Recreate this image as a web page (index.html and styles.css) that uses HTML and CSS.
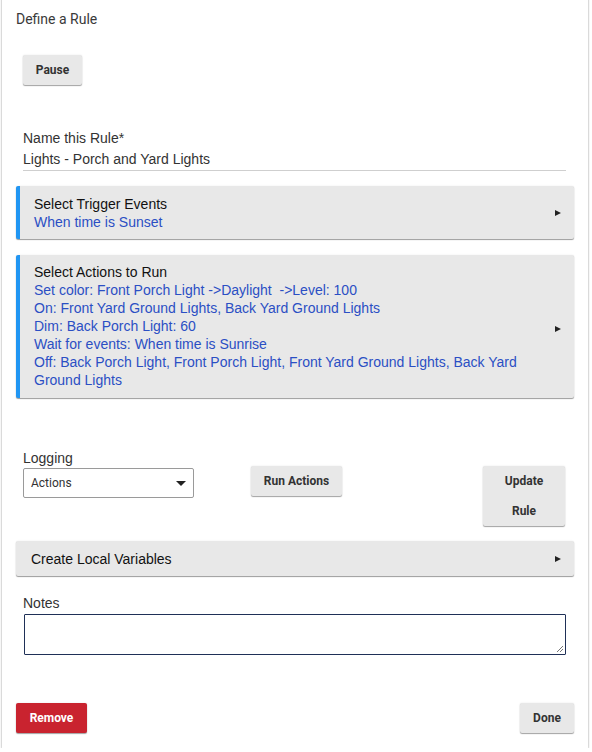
FILE: index.html
```html
<!DOCTYPE html>
<html>
<head>
<meta charset="utf-8">
<link rel="stylesheet" href="styles.css">
</head>
<body>
<div class="card">
  <div class="title">Define a Rule</div>
  <div class="pause-row"><button class="btn">Pause</button></div>

  <div class="field">
    <div class="label">Name this Rule*</div>
    <div class="text-input">Lights - Porch and Yard Lights</div>
  </div>

  <div class="panel accent trigger">
    <div class="panel-body">
      <div class="panel-title">Select Trigger Events</div>
      <div class="panel-desc">When time is Sunset</div>
    </div>
    <span class="arrow"></span>
  </div>

  <div class="panel accent actions">
    <div class="panel-body">
      <div class="panel-title">Select Actions to Run</div>
      <div class="panel-desc">Set color: Front Porch Light -&gt;Daylight&nbsp; -&gt;Level: 100</div>
      <div class="panel-desc">On: Front Yard Ground Lights, Back Yard Ground Lights</div>
      <div class="panel-desc">Dim: Back Porch Light: 60</div>
      <div class="panel-desc">Wait for events: When time is Sunrise</div>
      <div class="panel-desc">Off: Back Porch Light, Front Porch Light, Front Yard Ground Lights, Back Yard Ground Lights</div>
    </div>
    <span class="arrow"></span>
  </div>

  <div class="controls">
    <div class="logging">
      <div class="label">Logging</div>
      <div class="select"><span>Actions</span><span class="caret"></span></div>
    </div>
    <button class="btn run">Run Actions</button>
    <button class="btn update">Update<br>Rule</button>
  </div>

  <div class="panel vars">
    <div class="panel-body">
      <div class="panel-title">Create Local Variables</div>
    </div>
    <span class="arrow"></span>
  </div>

  <div class="notes">
    <div class="label">Notes</div>
    <div class="textarea"><svg class="grip" width="8" height="8" viewBox="0 0 8 8"><path d="M7 1 L1 7 M7 4 L4 7" stroke="#777" stroke-width="1"/></svg></div>
  </div>

  <div class="footer">
    <button class="btn remove">Remove</button>
    <button class="btn done">Done</button>
  </div>
</div>
</body>
</html>
```
FILE: styles.css
```css
html, body {
  margin: 0;
  padding: 0;
  background: #ffffff;
}

body {
  font-family: "Liberation Sans", Arial, sans-serif;
  font-size: 14px;
  color: #222;
}

.card {
  box-sizing: border-box;
  width: 586px;
  margin: -6px 0 0 2px;
  padding: 17px 0 15px 0;
  background: #fff;
  box-shadow: 0 1px 2px rgba(0, 0, 0, 0.35), 0 0 2px rgba(0, 0, 0, 0.12);
}

.title {
  font-family: Roboto, "Liberation Sans", sans-serif;
  font-size: 14px;
  line-height: 16px;
  color: #3a3a3a;
  margin-left: 14px;
}

.btn {
  font-family: Roboto, "Liberation Sans", sans-serif;
  font-weight: 700;
  font-size: 12px;
  color: #333;
  background: #e8e8e8;
  border: none;
  border-radius: 2px;
  padding: 0;
  height: 30px;
  box-shadow: 0 1px 1px rgba(0, 0, 0, 0.35), 0 0 2px rgba(0, 0, 0, 0.1);
  cursor: pointer;
}

.pause-row {
  margin: 28px 0 0 21px;
}

.pause-row .btn {
  width: 59px;
}

.field {
  margin: 44px 0 0 21px;
  width: 543px;
}

.label {
  font-size: 14px;
  line-height: 18px;
  color: #333;
}

.text-input {
  font-size: 14px;
  line-height: 18px;
  padding: 3px 0 2px 0;
  color: #333;
  border-bottom: 1px solid #cfcfcf;
}

.panel {
  box-sizing: border-box;
  width: 558px;
  margin-left: 14px;
  background: #e8e8e8;
  display: flex;
  align-items: center;
  box-shadow: 0 1px 1px rgba(0, 0, 0, 0.38), 0 0 2px rgba(0, 0, 0, 0.08);
  border-radius: 2px;
}

.panel.accent {
  border-left: 4px solid #2196f3;
}

.panel-body {
  flex: 1;
  min-width: 0;
}

.panel-title {
  color: #111;
  line-height: 18px;
}

.panel-desc {
  color: #2b4fc4;
  line-height: 18px;
}

.arrow {
  width: 0;
  height: 0;
  border-top: 3.5px solid transparent;
  border-bottom: 3.5px solid transparent;
  border-left: 6px solid #222;
  margin-right: 13px;
  flex: none;
}

.trigger {
  margin-top: 15px;
  padding: 9px 0 8px 14px;
}

.actions {
  margin-top: 16px;
  padding: 8px 0 9px 14px;
}

.actions .panel-body {
  padding-right: 36px;
}

.actions .arrow {
  margin-top: 6px;
}

.controls {
  display: flex;
  align-items: flex-start;
  margin: 51px 0 0 21px;
  width: 542px;
}

.logging {
  width: 228px;
}

.select {
  box-sizing: border-box;
  width: 171px;
  height: 30px;
  margin-top: 1px;
  border: 1px solid #9a9a9a;
  border-radius: 2px;
  display: flex;
  align-items: center;
  justify-content: space-between;
  padding: 0 7px 0 7px;
  font-family: Roboto, "Liberation Sans", sans-serif;
  font-size: 12px;
  color: #333;
}

.caret {
  width: 0;
  height: 0;
  border-left: 5px solid transparent;
  border-right: 5px solid transparent;
  border-top: 5px solid #222;
  margin-top: 1px;
}

.btn.run {
  width: 91px;
  margin-top: 17px;
}

.btn.update {
  width: 82px;
  height: 60px;
  line-height: 30px;
  margin-top: 17px;
  margin-left: auto;
}

.vars {
  margin-top: 15px;
  height: 35px;
  padding-left: 15px;
}

.notes {
  margin: 18px 0 0 21px;
}

.textarea {
  box-sizing: border-box;
  position: relative;
  width: 542px;
  height: 41px;
  margin: 2px 0 0 1px;
  border: 1px solid #1f3057;
  border-radius: 1px;
}

.grip {
  position: absolute;
  right: 1px;
  bottom: 1px;
}

.footer {
  display: flex;
  justify-content: space-between;
  margin: 48px 14px 0 14px;
}

.btn.remove {
  width: 71px;
  background: #c9232f;
  color: #fff;
}

.btn.done {
  width: 54px;
}
```
